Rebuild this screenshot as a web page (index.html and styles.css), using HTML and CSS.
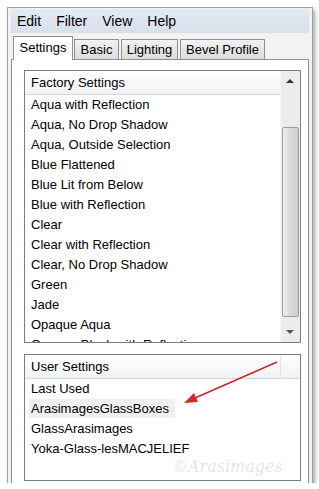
FILE: index.html
```html
<!DOCTYPE html>
<html lang="en">
<head>
    <meta charset="UTF-8">
    <meta name="viewport" content="width=device-width, initial-scale=1.0">
    <title>Presets</title>
    <link rel="stylesheet" href="styles.css">
</head>
<body>
    <div id="win">
        <div id="menubar">
            <span class="menu">Edit</span>
            <span class="menu">Filter</span>
            <span class="menu">View</span>
            <span class="menu">Help</span>
        </div>
        <div id="tabs">
            <div class="tab active" id="t_settings">Settings</div>
            <div class="tab" id="t_basic">Basic</div>
            <div class="tab" id="t_lighting">Lighting</div>
            <div class="tab" id="t_bevel">Bevel Profile</div>
        </div>
        <div id="panel">
            <div class="box" id="factory">
                <div class="col">
                    <div class="hdr">Factory Settings</div>
                    <div class="rows">
                        <div class="row">Aqua with Reflection</div>
                        <div class="row">Aqua, No Drop Shadow</div>
                        <div class="row">Aqua, Outside Selection</div>
                        <div class="row">Blue Flattened</div>
                        <div class="row">Blue Lit from Below</div>
                        <div class="row">Blue with Reflection</div>
                        <div class="row">Clear</div>
                        <div class="row">Clear with Reflection</div>
                        <div class="row">Clear, No Drop Shadow</div>
                        <div class="row">Green</div>
                        <div class="row">Jade</div>
                        <div class="row">Opaque Aqua</div>
                        <div class="row">Opaque Black with Reflection</div>
                    </div>
                </div>
                <div class="scroll">
                    <div class="arrow up"></div>
                    <div class="track"><div class="thumb"></div></div>
                    <div class="arrow down"></div>
                </div>
            </div>
            <div class="box" id="user">
                <div class="col">
                    <div class="hdr">User Settings</div>
                    <div class="rows">
                        <div class="row">Last Used</div>
                        <div class="row"><span class="sel">ArasimagesGlassBoxes</span></div>
                        <div class="row">GlassArasimages</div>
                        <div class="row">Yoka-Glass-lesMACJELIEF</div>
                    </div>
                </div>
                <div class="hdr blank"></div>
            </div>
        </div>
    </div>

    <svg id="pointer" width="319" height="489" viewBox="0 0 319 489">
        <line x1="277" y1="362" x2="195" y2="398" stroke="#c3272b" stroke-width="1.5"/>
        <polygon points="184,403 198,402 194,393" fill="#d0282c"/>
    </svg>
    <div id="mark">&copy;Arasimages</div>
</body>
</html>
```

FILE: styles.css
```css
body{
    margin: 0;
    background: #fff;
    font-family: "Liberation Sans", Arial, sans-serif;
    color: #000;
}
#win{
    margin: 7px 0 0 7px;
    width: 306px;
    height: 476px;
    box-sizing: border-box;
    border: 1px solid #a2a2a2;
    border-bottom: none;
    background: #f2f2f2;
    box-shadow: 2px 3px 4px rgba(0,0,0,0.35);
    padding: 1px 3px 0 3px;
    display: flex;
    flex-direction: column;
}
#menubar{
    height: 24px;
    background: linear-gradient(#e4eaf3, #d7dfea);
    display: flex;
    align-items: center;
    padding-left: 6px;
    font-size: 14px;
}
.menu{
    margin-right: 15px;
}
#tabs{
    margin-top: 3px;
    height: 23px;
    display: flex;
    align-items: flex-end;
    padding-left: 2px;
    font-size: 13px;
}
.tab{
    box-sizing: border-box;
    height: 20px;
    line-height: 19px;
    text-align: center;
    border: 1px solid #8d9096;
    border-bottom: none;
    background: linear-gradient(#f3f3f3, #e6e6e6 50%, #dcdcdc);
}
.tab.active{
    height: 24px;
    line-height: 22px;
    margin-bottom: -1px;
    background: #fff;
    position: relative;
    z-index: 1;
}
#t_settings{ width: 60px; }
#t_basic{ width: 45px; margin-left: 1px; }
#t_lighting{ width: 57px; margin-left: 2px; }
#t_bevel{ width: 85px; margin-left: 2px; }
#panel{
    flex: 1;
    border: 1px solid #8d9096;
    border-bottom: none;
    background: #fff;
    padding: 10px 7px 0 12px;
}
.box{
    box-sizing: border-box;
    width: 277px;
    border: 1px solid #7d7d7d;
    display: flex;
    font-size: 13px;
    overflow: hidden;
}
#factory{ height: 273px; }
#user{ height: 127px; margin-top: 11px; }
.col{
    flex: 1;
    display: flex;
    flex-direction: column;
    overflow: hidden;
}
.hdr{
    height: 23px;
    line-height: 23px;
    padding-left: 6px;
    background: linear-gradient(#ffffff, #f1f2f4);
    border-bottom: 1px solid #d6d7d9;
}
.hdr.blank{
    width: 19px;
    padding: 0;
    border-left: 1px solid #e2e3e5;
}
.rows{
    flex: 1;
    overflow: hidden;
}
.row{
    height: 20px;
    line-height: 20px;
    padding-left: 6px;
    white-space: nowrap;
}
.sel{
    display: inline-block;
    background: #efefef;
    margin-left: -2px;
    padding: 0 6px 0 2px;
    line-height: 19px;
}
.scroll{
    width: 19px;
    background: #ececec;
    border-left: 1px solid #f6f6f6;
    display: flex;
    flex-direction: column;
}
.arrow{
    height: 20px;
    position: relative;
}
.arrow::after{
    content: "";
    position: absolute;
    left: 5px;
    top: 8px;
    border-left: 4px solid transparent;
    border-right: 4px solid transparent;
}
.up::after{ border-bottom: 4px solid #333; }
.down::after{ border-top: 4px solid #555; }
.track{
    flex: 1;
    padding-top: 36px;
}
.thumb{
    height: 190px;
    margin: 0 1px;
    box-sizing: border-box;
    border: 1px solid #9c9c9c;
    border-radius: 2px;
    background: linear-gradient(90deg, #eeeeee, #dadada 45%, #cfcfcf);
}
#pointer{
    position: absolute;
    left: 0;
    top: 0;
    pointer-events: none;
}
#mark{
    position: absolute;
    left: 172px;
    top: 457px;
    font-family: "DejaVu Serif", serif;
    font-style: italic;
    font-size: 16px;
    color: rgba(0,0,0,0.12);
}
```
